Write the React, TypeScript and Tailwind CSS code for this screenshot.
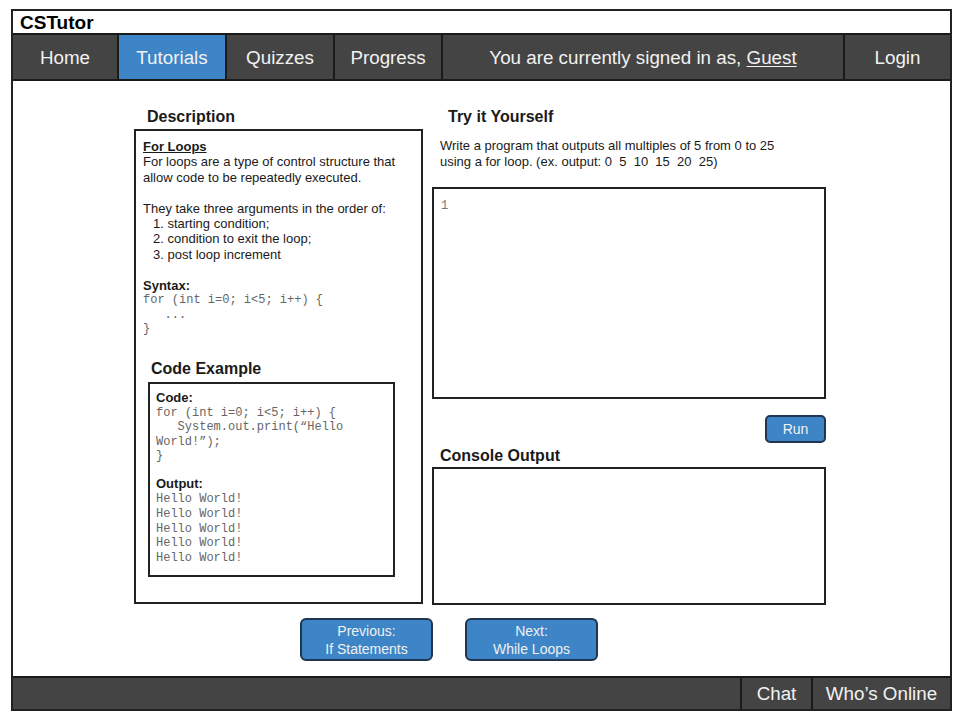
const navItems = [
  { label: 'Home', w: 'w-[106px]' },
  { label: 'Tutorials', w: 'w-[108px]', active: true },
  { label: 'Quizzes', w: 'w-[108px]' },
  { label: 'Progress', w: 'w-[108px]' },
]

const mono = { fontFamily: '"Liberation Mono", "Courier New", monospace' }

export default function App() {
  return (
    <div className="min-h-screen bg-white pt-[9px] pl-[11px]" style={{ fontFamily: '"Liberation Sans", Arial, sans-serif' }}>
      <div className="flex h-[702px] w-[941px] flex-col border-2 border-[#222]">
        {/* Title */}
        <div className="flex h-[22px] items-center pl-[7px] text-[19px] font-bold leading-none text-black">CSTutor</div>

        {/* Nav */}
        <nav className="flex h-[48px] border-y-2 border-[#1a1a1a] bg-[#444] text-[18.8px] text-[#f2f2f2]">
          {navItems.map((item) => (
            <div
              key={item.label}
              className={`${item.w} flex items-center justify-center border-r-2 border-[#1a1a1a] pt-[3px] ${item.active ? 'bg-[#3d85c6]' : ''}`}
            >
              {item.label}
            </div>
          ))}
          <div className="flex flex-1 items-center justify-center border-r-2 border-[#1a1a1a] pt-[3px]">
            You are currently signed in as,&nbsp;<span className="underline underline-offset-2">Guest</span>
          </div>
          <div className="flex w-[105px] items-center justify-center pt-[3px]">Login</div>
        </nav>

        {/* Main */}
        <main className="flex flex-1 flex-col pt-[26px] text-[#1a1a1a]">
          <div className="flex">
            {/* Left column */}
            <div className="ml-[121px] w-[289px]">
              <h2 className="ml-[13px] h-[20px] text-[16px] font-bold leading-[20px]">Description</h2>
              <div className="mt-[2px] h-[475px] border-2 border-[#222] px-[7px] pt-[8px] text-[13px] leading-[15.4px]">
                <div className="font-bold underline">For Loops</div>
                <div>For loops are a type of control structure that allow code to be repeatedly executed.</div>
                <div className="h-[15.4px]" />
                <div>They take three arguments in the order of:</div>
                <div className="pl-[10px]">
                  <div>1. starting condition;</div>
                  <div>2. condition to exit the loop;</div>
                  <div>3. post loop increment</div>
                </div>
                <div className="h-[15.4px]" />
                <div className="font-bold">Syntax:</div>
                <pre className="text-[12px] leading-[14.5px] text-[#666]" style={mono}>
{`for (int i=0; i<5; i++) {
   ...
}`}
                </pre>

                <h2 className="mt-[22px] ml-[8px] h-[20px] text-[16px] font-bold leading-[20px]">Code Example</h2>
                <div className="mt-[3px] ml-[5px] h-[195px] w-[247px] border-2 border-[#222] px-[6px] pt-[6px]">
                  <div className="font-bold leading-[15px]">Code:</div>
                  <pre className="mt-[1px] whitespace-pre-wrap text-[12px] leading-[14.6px] text-[#666]" style={mono}>
{`for (int i=0; i<5; i++) {
   System.out.print(“Hello World!”);
}`}
                  </pre>
                  <div className="h-[12px]" />
                  <div className="font-bold leading-[15px]">Output:</div>
                  <pre className="mt-[1px] text-[12px] leading-[14.8px] text-[#666]" style={mono}>
{`Hello World!
Hello World!
Hello World!
Hello World!
Hello World!`}
                  </pre>
                </div>
              </div>
            </div>

            {/* Right column */}
            <div className="ml-[9px] flex w-[394px] flex-col">
              <h2 className="ml-[16px] h-[20px] text-[16px] font-bold leading-[20px]">Try it Yourself</h2>
              <p className="mt-[11px] ml-[8px] text-[13px] leading-[15.5px]">
                Write a program that outputs all multiples of 5 from 0 to 25
                <br />
                using a for loop. (ex. output: 0&nbsp; 5&nbsp; 10&nbsp; 15&nbsp; 20&nbsp; 25)
              </p>
              <div className="mt-[18px] h-[212px] border-2 border-[#222] px-[7px] pt-[10px]">
                <div className="text-[12px] leading-[14px] text-[#777]" style={mono}>1</div>
              </div>
              <button className="mt-[16px] h-[28px] w-[61px] self-end rounded-[5px] border-2 border-[#1f3550] bg-[#3d85c6] text-[14px] text-[#f0f0f0]">
                Run
              </button>
              <h2 className="mt-[3px] ml-[8px] h-[20px] text-[16px] font-bold leading-[20px]">Console Output</h2>
              <div className="mt-[1px] h-[138px] border-2 border-[#222]" />
            </div>
          </div>

          {/* Prev / Next */}
          <div className="mt-[13px] flex gap-[32px] pl-[287px]">
            <button className="flex h-[43px] w-[133px] flex-col items-center justify-center rounded-[6px] border-2 border-[#1f3550] bg-[#3d85c6] text-[14px] leading-[18px] text-[#f0f0f0]">
              <span>Previous:</span>
              <span>If Statements</span>
            </button>
            <button className="flex h-[43px] w-[133px] flex-col items-center justify-center rounded-[6px] border-2 border-[#1f3550] bg-[#3d85c6] text-[14px] leading-[18px] text-[#f0f0f0]">
              <span>Next:</span>
              <span>While Loops</span>
            </button>
          </div>
        </main>

        {/* Footer */}
        <footer className="flex h-[33px] border-t-2 border-[#1a1a1a] bg-[#444] text-[18.8px] text-[#f2f2f2]">
          <div className="flex-1 border-r-2 border-[#1a1a1a]" />
          <div className="flex w-[71px] items-center justify-center border-r-2 border-[#1a1a1a] pt-[2px]">Chat</div>
          <div className="flex w-[137px] items-center justify-center pt-[2px]">Who’s Online</div>
        </footer>
      </div>
    </div>
  )
}
